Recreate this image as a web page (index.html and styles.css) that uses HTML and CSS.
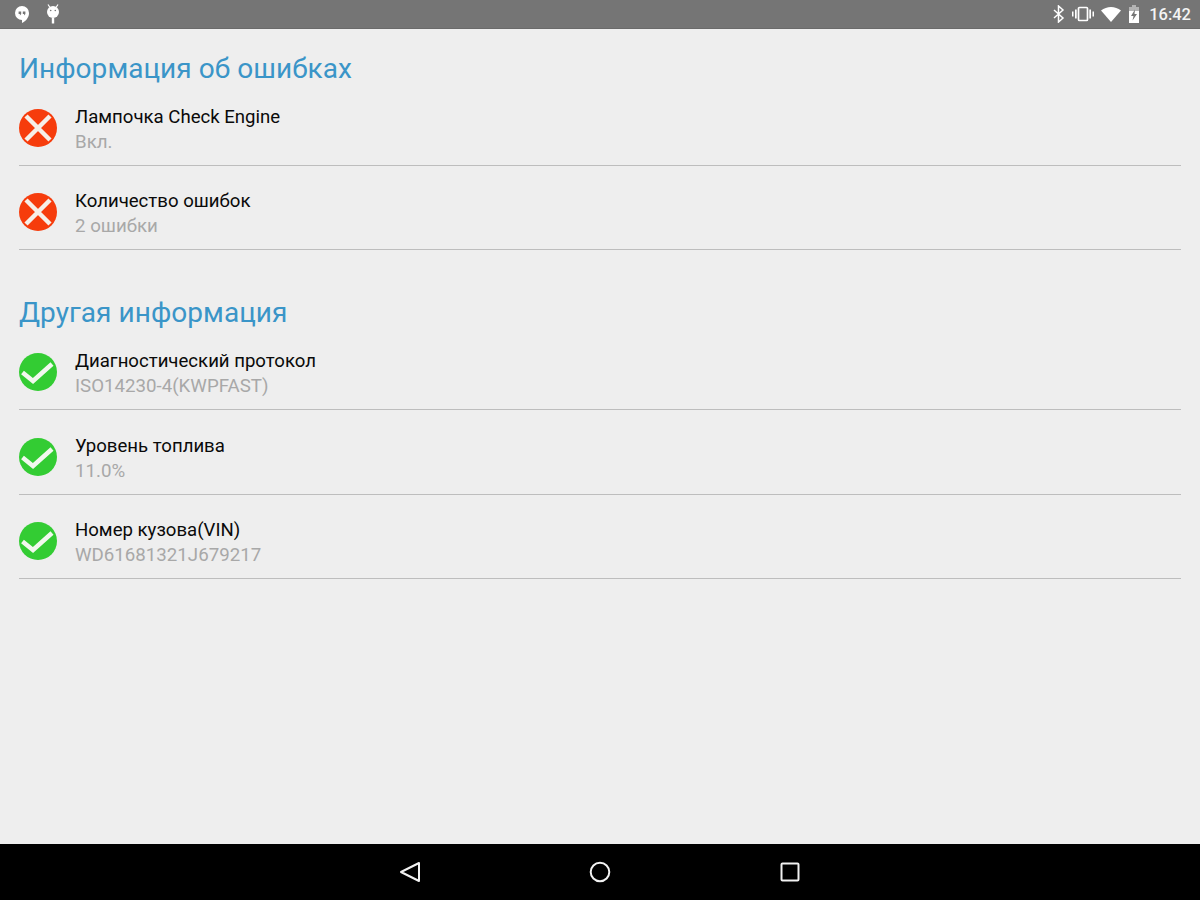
FILE: index.html
```html
<!DOCTYPE html>
<html lang="ru">
<head>
<meta charset="utf-8">
<title>Информация об ошибках</title>
<link rel="stylesheet" href="styles.css">
</head>
<body>
<div class="screen">
  <header class="status">
    <div class="status-left">
      <svg class="ic" width="16" height="20" viewBox="0 0 16 20"><path fill="#fff" d="M8 2a7 7 0 0 0-7 7 7 7 0 0 0 7 7v3c4-2 7-5.500 7-10a7 7 0 0 0-7-7z"/><path fill="#757575" d="M4.600 7.500h2.600v2.600l-1.300 1.500v-1.500H4.600zM8.800 7.500h2.600v2.600l-1.300 1.500v-1.500H8.800z"/></svg>
      <svg class="ic" width="16" height="20" viewBox="0 0 16 20"><path stroke="#fff" stroke-width="1.200" d="M3 .5l2 3M13 .5l-2 3"/><circle cx="8" cy="8" r="6" fill="#fff"/><rect x="6.800" y="14" width="2.400" height="5.500" fill="#fff"/><circle cx="5.700" cy="6.500" r="0.800" fill="#757575"/><circle cx="10.300" cy="6.500" r="0.800" fill="#757575"/></svg>
    </div>
    <div class="status-right">
      <svg class="ic" width="12" height="18" viewBox="0 0 12 18"><path fill="none" stroke="#fff" stroke-width="1.500" d="M1 5l9 8-4.500 4V1L10 5l-9 8"/></svg>
      <svg class="ic" width="22" height="16" viewBox="0 0 22 16"><rect x="6.500" y="1.500" width="9" height="13" rx="1" fill="none" stroke="#fff" stroke-width="1.700"/><path fill="#fff" d="M0 5.500h1.500v5H0zM3 3.500h1.700v9H3zM17.300 3.500H19v9h-1.700zM20.500 5.500H22v5h-1.500z"/></svg>
      <svg class="ic" width="20" height="15" viewBox="0 0 20 15"><path fill="#fff" d="M0 3.500C3 1.200 6.300 0 10 0s7 1.200 10 3.500L10 15z"/></svg>
      <svg class="ic" width="12" height="18" viewBox="0 0 12 18"><path fill="#fff" fill-opacity=".45" d="M4 0h4v2h3v4H1V2h3z"/><path fill="#fff" d="M1 6h10v12H1z"/><path fill="#757575" d="M7 4.500L3 11h2.500L4.500 15.500 9 9H6.500z"/></svg>
      <span class="clock">16:42</span>
    </div>
  </header>
  <main class="content">
    <section class="group">
      <h2 class="group-title">Информация об ошибках</h2>
      <div class="item">
        <svg class="badge" viewBox="0 0 38 38"><circle cx="19" cy="19" r="19" fill="#f63c0c"/><path stroke="#f6efe8" stroke-width="4.500" d="M7 7l24 24M31 7L7 31"/></svg>
        <div class="item-text"><div class="item-name">Лампочка Check Engine</div><div class="item-value">Вкл.</div></div>
      </div>
      <div class="item">
        <svg class="badge" viewBox="0 0 38 38"><circle cx="19" cy="19" r="19" fill="#f63c0c"/><path stroke="#f6efe8" stroke-width="4.500" d="M7 7l24 24M31 7L7 31"/></svg>
        <div class="item-text"><div class="item-name">Количество ошибок</div><div class="item-value">2 ошибки</div></div>
      </div>
    </section>
    <section class="group">
      <h2 class="group-title">Другая информация</h2>
      <div class="item">
        <svg class="badge" viewBox="0 0 38 38"><circle cx="19" cy="19" r="19" fill="#33cc33"/><path fill="none" stroke="#f2f8ee" stroke-width="4.500" d="M3.500 19.500L14 28 33 11"/></svg>
        <div class="item-text"><div class="item-name">Диагностический протокол</div><div class="item-value">ISO14230-4(KWPFAST)</div></div>
      </div>
      <div class="item">
        <svg class="badge" viewBox="0 0 38 38"><circle cx="19" cy="19" r="19" fill="#33cc33"/><path fill="none" stroke="#f2f8ee" stroke-width="4.500" d="M3.500 19.500L14 28 33 11"/></svg>
        <div class="item-text"><div class="item-name">Уровень топлива</div><div class="item-value">11.0%</div></div>
      </div>
      <div class="item">
        <svg class="badge" viewBox="0 0 38 38"><circle cx="19" cy="19" r="19" fill="#33cc33"/><path fill="none" stroke="#f2f8ee" stroke-width="4.500" d="M3.500 19.500L14 28 33 11"/></svg>
        <div class="item-text"><div class="item-name">Номер кузова(VIN)</div><div class="item-value">WD61681321J679217</div></div>
      </div>
    </section>
  </main>
  <nav class="navbar">
    <svg width="20" height="22" viewBox="0 0 20 22"><path fill="none" stroke="#f2f2f2" stroke-width="2" stroke-linejoin="round" d="M19 2v18L1 11z"/></svg>
    <svg width="22" height="22" viewBox="0 0 22 22"><circle cx="11" cy="11" r="9.300" fill="none" stroke="#f2f2f2" stroke-width="2"/></svg>
    <svg width="20" height="20" viewBox="0 0 20 20"><rect x="1.500" y="1.500" width="17" height="17" rx="1" fill="none" stroke="#f2f2f2" stroke-width="2"/></svg>
  </nav>
</div>
</body>
</html>
```
FILE: styles.css
```css
* { box-sizing: border-box; }
html, body { margin: 0; padding: 0; }
body { font-family: Roboto, "Noto Sans", sans-serif; }
.screen { width: 1200px; height: 900px; display: flex; flex-direction: column; background: #eeeeee; overflow: hidden; }
.status { height: 28px; flex: none; background: #757575; display: flex; align-items: center; justify-content: space-between; padding: 0 9px 0 14px; box-shadow: 0 1px 0 #6a6a6a; }
.status-left { display: flex; align-items: center; gap: 15px; }
.status-right { display: flex; align-items: center; gap: 7px; }
.ic { display: block; }
.clock { color: #f4f4f4; font-size: 16.5px; font-weight: 500; margin-left: 2px; }
.content { flex: 1; padding: 0 19px; }
.group { margin-bottom: 22.5px; }
.group-title { margin: 0; padding-top: 20.6px; height: 53px; font-size: 28px; letter-spacing: 0.05px; line-height: 40px; font-weight: 400; color: #3a95c8; }
.item { height: 84.5px; display: flex; align-items: flex-start; padding-top: 23.6px; border-bottom: 1px solid #bdbdbd; }
.badge { width: 38px; height: 38px; margin-top: 4.4px; flex: none; }
.item-text { margin-left: 18px; }
.item-name { font-size: 18.6px; line-height: 25px; color: #0a0a0a; }
.item-value { font-size: 18.7px; line-height: 25px; color: #a8a8a8; }
.navbar { height: 56px; flex: none; background: #000; display: flex; align-items: center; justify-content: center; gap: 169px; }
```
